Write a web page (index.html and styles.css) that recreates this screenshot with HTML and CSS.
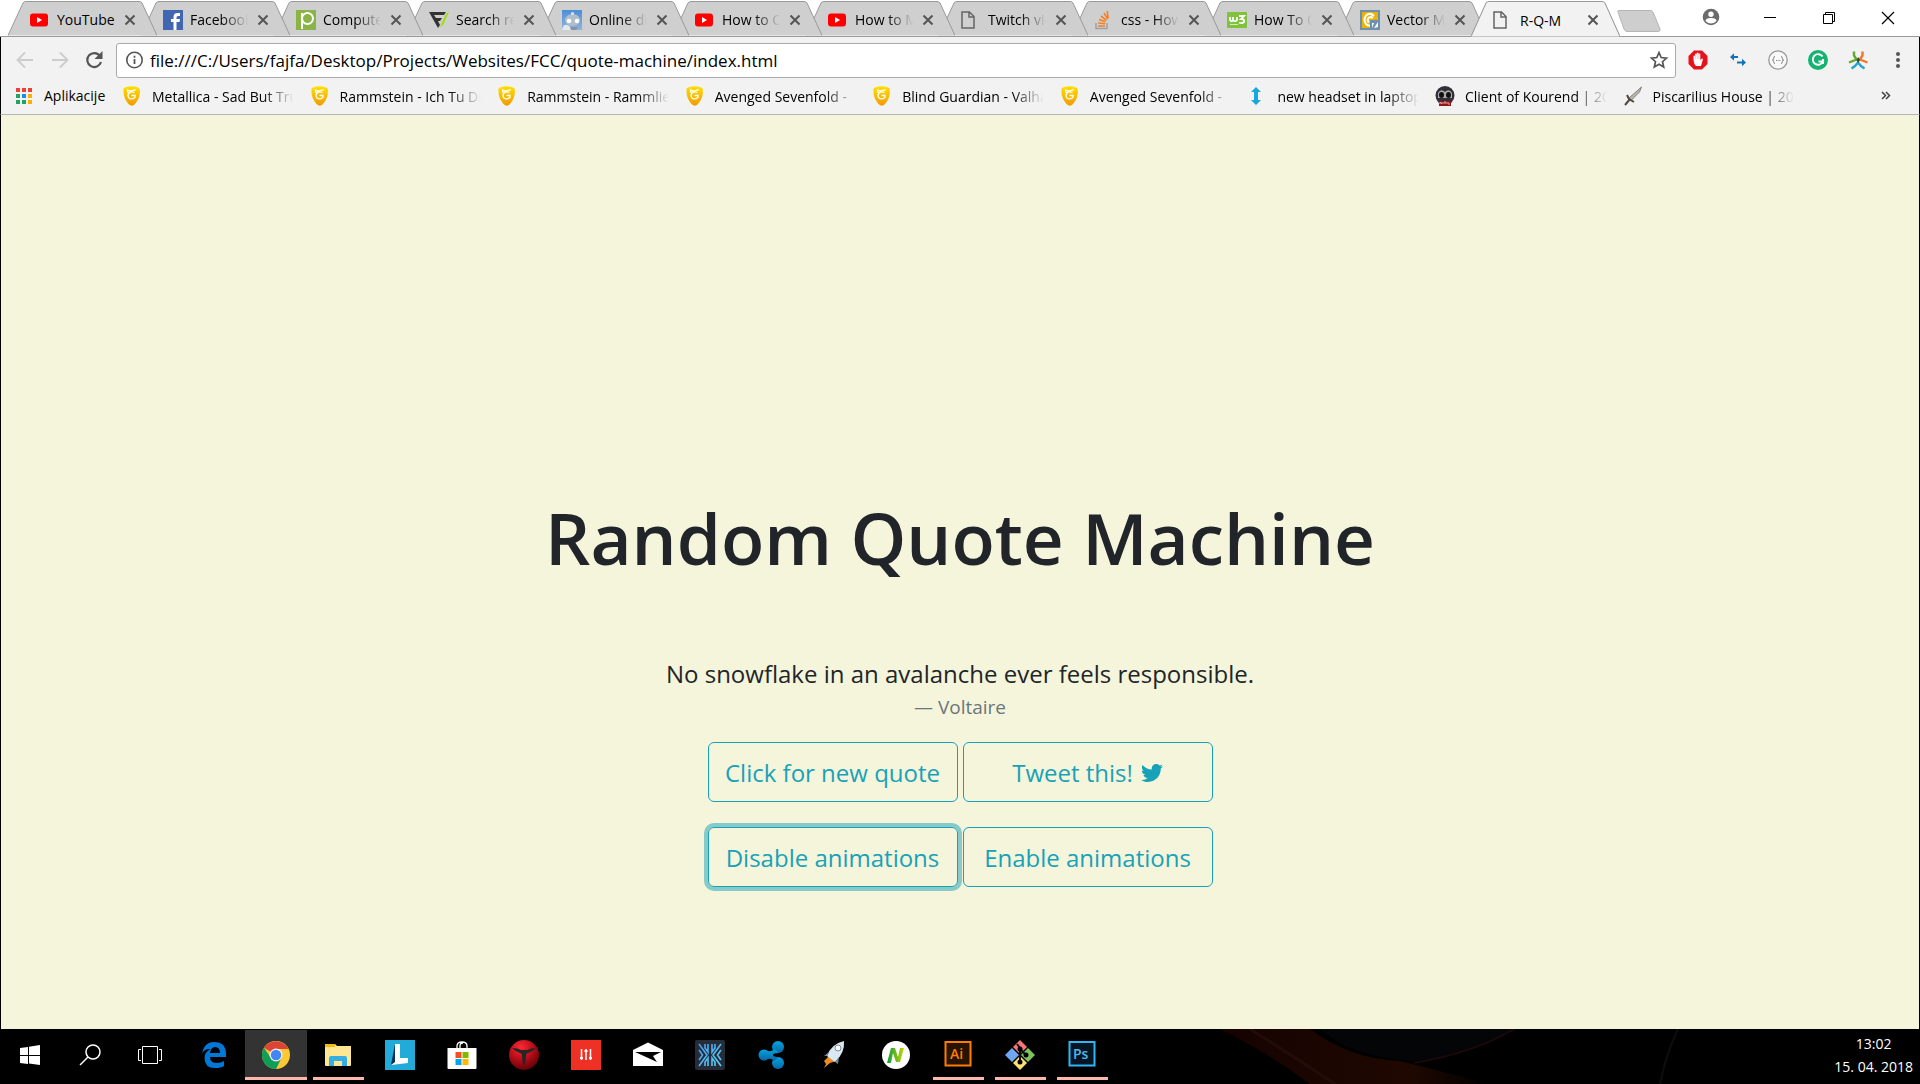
FILE: index.html
```html
<!DOCTYPE html>
<html lang="en">
<head>
<meta charset="utf-8">
<title>R-Q-M</title>
<link rel="stylesheet" href="styles.css">
</head>
<body>
<svg class="defs" aria-hidden="true">
  <defs>
    <linearGradient id="gold" x1="0" y1="0" x2="0" y2="1"><stop offset="0" stop-color="#ffe000"/><stop offset="1" stop-color="#f29a00"/></linearGradient>
    <linearGradient id="sky" x1="0" y1="0" x2="0" y2="1"><stop offset="0" stop-color="#4c8ed8"/><stop offset="1" stop-color="#8fb6dc"/></linearGradient>
    <linearGradient id="ripple" x1="0" y1="0" x2="0" y2="1"><stop offset="0" stop-color="#00a5df"/><stop offset="1" stop-color="#0a66a8"/></linearGradient>
    <linearGradient id="exo" gradientUnits="userSpaceOnUse" x1="0" y1="0" x2="30" y2="30"><stop offset="0" stop-color="#3f8ff0"/><stop offset="1" stop-color="#5fe0f5"/></linearGradient>
    <radialGradient id="ruby" cx=".4" cy=".25" r=".8"><stop offset="0" stop-color="#ff2a35"/><stop offset=".5" stop-color="#b80d18"/><stop offset="1" stop-color="#5a0006"/></radialGradient>
    <linearGradient id="neo" x1="0" y1="0" x2="1" y2="0"><stop offset="0" stop-color="#0f9b3c"/><stop offset="1" stop-color="#c4d600"/></linearGradient>
  </defs>
  <symbol id="shape" viewBox="0 0 149 36" preserveAspectRatio="none"><path d="M0 35.500 L15 3 Q16 1.500 18 1.500 H131 Q133 1.500 134 3 L149 35.500" stroke-width="1"/></symbol>
  <symbol id="close" viewBox="0 0 14 14"><path d="M2.500 2.500l9 9M11.500 2.500l-9 9" stroke="#555" stroke-width="2"/></symbol>
  <symbol id="youtube" viewBox="0 0 20 20"><rect y="3.500" width="18" height="13" rx="3" fill="#f00"/><path d="M7 7l5 3-5 3z" fill="#fff"/></symbol>
  <symbol id="page" viewBox="0 0 20 20"><path d="M1 2h7.500L13 6.500V18H1zM8 2v5h5" fill="none" stroke="#666" stroke-width="1.500"/></symbol>
  <symbol id="pick" viewBox="0 0 20 20"><path d="M1.500 4Q1 2 3 1.500Q10-1 16 1.500Q18 2 17.800 4Q18.500 12 13 18Q10 21.500 6.500 18Q1 12 1.500 4z" fill="url(#gold)"/><path d="M12.500 6.500Q9 5 7 7Q5 9.500 7 12Q9.500 14 13 11.500V9.500H9.500M6 7L5.500 4Q8 5.500 10.500 4.500T14 4" fill="none" stroke="#fff" stroke-width="1.300"/></symbol>
</svg>

<header class="browser">
  <div class="titlebar">
    <nav class="tabs" aria-label="Tabs">
      <div class="tab"><svg class="tab-shape"><use href="#shape"/></svg><svg class="fav"><use href="#youtube"/></svg><a class="tab-title" href="#">YouTube</a><button class="tab-close" aria-label="Close tab"><svg><use href="#close"/></svg></button></div>
      <div class="tab"><svg class="tab-shape"><use href="#shape"/></svg><svg class="fav" viewBox="0 0 20 20"><path d="M0 0h20v20H0z" fill="#4267b2"/><path d="M10.500 20v-8H8V9h2.500V7Q10.500 3 14.500 3H17v3h-2Q13.500 6 13.500 7.500V9H17l-.5 3h-3v8z" fill="#fff"/></svg><a class="tab-title fade" href="#">Facebook</a><button class="tab-close" aria-label="Close tab"><svg><use href="#close"/></svg></button></div>
      <div class="tab"><svg class="tab-shape"><use href="#shape"/></svg><svg class="fav" viewBox="0 0 20 20"><path d="M0 0h20v20H0z" fill="#8ab446"/><path d="M6 19V3" stroke="#fff" stroke-width="2"/><circle cx="11.500" cy="8.500" r="5.500" fill="none" stroke="#fff" stroke-width="2"/></svg><a class="tab-title fade" href="#">Computer</a><button class="tab-close" aria-label="Close tab"><svg><use href="#close"/></svg></button></div>
      <div class="tab"><svg class="tab-shape"><use href="#shape"/></svg><svg class="fav" viewBox="0 0 20 20"><path d="M0 2h17l-2 3H5l2 3h6l-2 3H9l2 4-2 3z" fill="#333"/><path d="M17 4l3-2-6 13-3 2z" fill="#9be000"/></svg><a class="tab-title fade" href="#">Search results</a><button class="tab-close" aria-label="Close tab"><svg><use href="#close"/></svg></button></div>
      <div class="tab"><svg class="tab-shape"><use href="#shape"/></svg><svg class="fav" viewBox="0 0 20 20"><path d="M0 0h20v20H0z" fill="url(#sky)"/><ellipse cx="10.500" cy="10" rx="7.500" ry="6" fill="#b4becb"/><circle cx="10.500" cy="3.500" r="1.500" fill="#e6e9ee"/><circle cx="7" cy="11" r="2.300" fill="#fff"/><circle cx="15" cy="11" r="2.300" fill="#fff"/><path d="M0 20q1-6 5-5t4 5z" fill="#e5e9ee"/><path d="M8 17h8l-2 3h-5z" fill="#8792a5"/></svg><a class="tab-title fade" href="#">Online diagram</a><button class="tab-close" aria-label="Close tab"><svg><use href="#close"/></svg></button></div>
      <div class="tab"><svg class="tab-shape"><use href="#shape"/></svg><svg class="fav"><use href="#youtube"/></svg><a class="tab-title fade" href="#">How to Create</a><button class="tab-close" aria-label="Close tab"><svg><use href="#close"/></svg></button></div>
      <div class="tab"><svg class="tab-shape"><use href="#shape"/></svg><svg class="fav"><use href="#youtube"/></svg><a class="tab-title fade" href="#">How to Make</a><button class="tab-close" aria-label="Close tab"><svg><use href="#close"/></svg></button></div>
      <div class="tab"><svg class="tab-shape"><use href="#shape"/></svg><svg class="fav"><use href="#page"/></svg><a class="tab-title fade" href="#">Twitch viewer</a><button class="tab-close" aria-label="Close tab"><svg><use href="#close"/></svg></button></div>
      <div class="tab"><svg class="tab-shape"><use href="#shape"/></svg><svg class="fav" viewBox="0 0 20 20"><path d="M2 13v5.500h11V13" fill="none" stroke="#9aa3ab" stroke-width="1.500"/><path d="M4 16h7M4.200 13l7 .8M5 9.500l6.500 2.300M7 6l5.500 4.300M10 3l3.800 6M13.200 1l1 7" stroke="#f48024" stroke-width="1.600"/></svg><a class="tab-title fade" href="#">css - How to</a><button class="tab-close" aria-label="Close tab"><svg><use href="#close"/></svg></button></div>
      <div class="tab"><svg class="tab-shape"><use href="#shape"/></svg><svg class="fav" viewBox="0 0 20 20"><rect y="2" width="20" height="16" rx="1" fill="#80c23c"/><path d="M3 7v3q1.500 2.500 3 0V7v3q2 2.500 4 0V7M12 6h5l-3 3q4 0 3 3-2 2-5 .5" fill="none" stroke="#fff" stroke-width="1.800"/><path d="M3 14.500h8" stroke="#d5edbb"/></svg><a class="tab-title fade" href="#">How To Create</a><button class="tab-close" aria-label="Close tab"><svg><use href="#close"/></svg></button></div>
      <div class="tab"><svg class="tab-shape"><use href="#shape"/></svg><svg class="fav" viewBox="0 0 20 20"><path d="M1 1h18v18H1z" fill="#eab308" stroke="#6f8faa" stroke-width="2"/><path d="M14 6Q10 2 6 5.500Q3 10 6 14Q8 16 10 15.500M13 8Q10 6 8 8.500Q7 11 9 12.500" fill="none" stroke="#fff" stroke-width="2"/><path d="M10 10h10v10H10z" fill="#6d92b1"/><path d="M12 18v-5h2zM14 18l4-6v5z" fill="#fff"/></svg><a class="tab-title fade" href="#">Vector Magic</a><button class="tab-close" aria-label="Close tab"><svg><use href="#close"/></svg></button></div>
      <div class="tab active"><svg class="tab-shape"><use href="#shape"/></svg><svg class="fav"><use href="#page"/></svg><a class="tab-title" href="#">R-Q-M</a><button class="tab-close" aria-label="Close tab"><svg><use href="#close"/></svg></button></div>
    </nav>
    <button class="new-tab" aria-label="New tab"><svg viewBox="0 0 44 22"><path d="M1 2Q0 .5 2 .5H33Q35 .5 36 2L43 19Q43.500 21.500 41.500 21.500H10Q8 21.500 7 19z" fill="#cecece" stroke="#b5b5b5"/></svg></button>
    <div class="window-controls">
      <button aria-label="Profile"><svg viewBox="0 0 20 20"><circle cx="10" cy="9" r="8.300" fill="#6b6b6b"/><circle cx="10" cy="6.300" r="2.700" fill="#fff"/><path d="M4.500 13q0-3 5.500-3t5.500 3q-5.500 5-11 0z" fill="#fff"/></svg></button>
      <button aria-label="Minimize"><svg viewBox="0 0 20 20"><path d="M4 9.500h12" stroke="#000"/></svg></button>
      <button aria-label="Restore"><svg viewBox="0 0 20 20"><path d="M4.500 6.500h9v9h-9zM6.500 6V4.500h9v9H14" fill="none" stroke="#000"/></svg></button>
      <button aria-label="Close"><svg viewBox="0 0 20 20"><path d="M4 4l12 12M16 4L4 16" stroke="#000" stroke-width="1.200"/></svg></button>
    </div>
  </div>

  <div class="toolbar">
    <div class="nav-buttons">
      <button aria-label="Back"><svg viewBox="0 0 20 20"><path d="M18 10H3M10 2.500L2.500 10l7.500 7.500" fill="none" stroke="#ccc" stroke-width="1.800"/></svg></button>
      <button aria-label="Forward"><svg viewBox="0 0 20 20"><path d="M2 10h15M10 2.500l7.500 7.500-7.500 7.500" fill="none" stroke="#ccc" stroke-width="1.800"/></svg></button>
      <button aria-label="Reload"><svg viewBox="0 0 20 20"><path d="M15 6A7 7 0 1 0 16 12" fill="none" stroke="#555" stroke-width="2.200"/><path d="M17.500 1v8h-8z" fill="#555"/></svg></button>
    </div>
    <div class="omnibox">
      <svg class="icon" viewBox="0 0 20 20"><circle cx="9.500" cy="10" r="7.700" fill="none" stroke="#555" stroke-width="1.600"/><path d="M9.500 9v5M9.500 5.800v2" stroke="#555" stroke-width="1.800"/></svg>
      <input type="text" aria-label="Address" value="file:///C:/Users/fajfa/Desktop/Projects/Websites/FCC/quote-machine/index.html">
      <button aria-label="Bookmark this page"><svg viewBox="0 0 20 20"><path d="M10 2.500l2.200 5 5.300.6-4 3.600 1.200 5.300L10 14.300 5.300 17l1.200-5.300-4-3.600 5.300-.6z" fill="none" stroke="#555" stroke-width="1.700"/></svg></button>
    </div>
    <div class="extensions">
      <button aria-label="Ad blocker"><svg viewBox="0 0 20 20"><path d="M6 .5h8L19.500 6v8L14 19.500H6L.5 14V6z" fill="#e5131c"/><path d="M5.500 8V6q.8-1 1.600 0V4q1-1.200 1.700 0V3q1-1.200 1.800 0v1q1-1.200 1.700 0v6l1.700-1.500q1.200 0 .8 1.200L13 16H8q-2.500-2-2.500-8z" fill="#fff"/><path d="M7.300 5v4M9.200 4v5M11 4v5" stroke="#f0a0a4" stroke-width=".6"/></svg></button>
      <button aria-label="Switcher"><svg viewBox="0 0 20 20"><path d="M4 7h6M9 12.500h6" stroke="#1473b8" stroke-width="2.200"/><path d="M2 7l4-3.800v7.600zM18 12.500l-4-3.800v7.600z" fill="#1473b8"/></svg></button>
      <button aria-label="JSON formatter"><svg viewBox="0 0 20 20"><circle cx="10" cy="10" r="9.200" fill="#f8f8f8" stroke="#999" stroke-width="1.300"/><path d="M7 6.500q-1.500 0-1.300 1.700T4.200 10q1.500 0 1.500 1.800T7 13.500M13 6.500q1.500 0 1.300 1.700t1.500 1.800q-1.500 0-1.500 1.800t-1.300 1.700" fill="none" stroke="#888"/><path d="M8 10.500h1M9.700 10.500h1M11.400 10.500h1" stroke="#888"/></svg></button>
      <button aria-label="Grammar"><svg viewBox="0 0 20 20"><circle cx="10" cy="10" r="10" fill="#15b371"/><path d="M14.500 6.500A5.300 5.300 0 1 0 15 11.500h-4.500M15 9v5" fill="none" stroke="#fff" stroke-width="1.900"/></svg></button>
      <button aria-label="Launcher"><svg viewBox="0 0 20 20"><path d="M6 1.500v4l2.500 4L1 12.500" fill="none" stroke="#63a72c" stroke-width="2.400"/><path d="M14.500 1.500v4l-2.500 4 7.500 3" fill="none" stroke="#f0742a" stroke-width="2.400"/><path d="M3.500 18.500l3.500-2.500 3-3.500 3 3.500 3.500 2.500" fill="none" stroke="#25a5cf" stroke-width="2.400"/><path d="M8.500 10l1.700-3 1.800 3-1.800 3z" fill="#2f4a3a"/></svg></button>
      <button aria-label="Menu"><svg viewBox="0 0 20 20" fill="#555"><circle cx="10" cy="4" r="2"/><circle cx="10" cy="10" r="2"/><circle cx="10" cy="16" r="2"/></svg></button>
    </div>
  </div>

  <nav class="bookmarks" aria-label="Bookmarks">
    <a class="apps" href="#"><svg class="icon" viewBox="0 0 20 20"><path d="M2 2h4v4H2zM8 2h4v4H8zM14 2h4v4h-4z" fill="#ea4335"/><path d="M2 8h4v4H2zM2 14h4v4H2zM8 14h4v4H8z" fill="#1fa463"/><path d="M8 8h4v4H8z" fill="#1a8cf0"/><path d="M14 8h4v4h-4zM14 14h4v4h-4z" fill="#fbb000"/></svg>Aplikacije</a>
    <div class="bookmark-list">
      <a href="#"><svg class="icon"><use href="#pick"/></svg><span class="fade">Metallica - Sad But True</span></a>
      <a href="#"><svg class="icon"><use href="#pick"/></svg><span class="fade">Rammstein - Ich Tu Dir</span></a>
      <a href="#"><svg class="icon"><use href="#pick"/></svg><span class="fade">Rammstein - Rammlied</span></a>
      <a href="#"><svg class="icon"><use href="#pick"/></svg><span class="fade">Avenged Sevenfold -</span></a>
      <a href="#"><svg class="icon"><use href="#pick"/></svg><span class="fade">Blind Guardian - Valhalla</span></a>
      <a href="#"><svg class="icon"><use href="#pick"/></svg><span class="fade">Avenged Sevenfold -</span></a>
      <a href="#"><svg class="icon" viewBox="0 0 20 20"><path d="M9 1l5 5h-3v8h3l-5 5-5-5h3V6H4z" fill="#15a8dc"/></svg><span class="fade">new headset in laptop</span></a>
      <a href="#"><svg class="icon" viewBox="0 0 20 20"><circle cx="10" cy="9.500" r="9.500" fill="#30303a"/><path d="M3 7q3-5 7-1 4-4 7 1v5H3z" fill="#aaa"/><ellipse cx="6.500" cy="9" rx="2.500" ry="3" fill="#111"/><ellipse cx="13.500" cy="9" rx="2.500" ry="3" fill="#111"/><path d="M4 15h12v5H4z" fill="#901818"/><path d="M5 18v-2l2 2v-2m2 2v-2h2v2m2-2v2h2" stroke="#e9a0a0" fill="none"/></svg><span class="fade">Client of Kourend | 2007</span></a>
      <a href="#"><svg class="icon" viewBox="0 0 20 20"><path d="M18.500 1l-2 5-8 8-2.500-2z" fill="#b9b7ae" stroke="#6d6b65" stroke-width=".8"/><path d="M4 9l2 4 5 3M7 13l-5 6" fill="none" stroke="#4d4943" stroke-width="2"/></svg><span class="fade">Piscarilius House | 2007</span></a>
    </div>
    <button class="more" aria-label="More bookmarks"><svg class="icon" viewBox="0 0 20 20"><path d="M7 6l3.500 3.500L7 13M11 6l3.500 3.500L11 13" fill="none" stroke="#444" stroke-width="1.500"/></svg></button>
  </nav>
</header>

<main class="page">
  <h1>Random Quote Machine</h1>
  <blockquote>
    <p>No snowflake in an avalanche ever feels responsible.</p>
    <footer>— Voltaire</footer>
  </blockquote>
  <div class="actions">
    <button class="btn">Click for new quote</button>
    <button class="btn">Tweet this! <svg viewBox="0 0 512 512"><path d="M459.400 151.700c.3 4.500.3 9.100.3 13.600 0 138.700-105.600 298.600-298.600 298.600-59.500 0-114.700-17.200-161.100-47.100 8.400 1 16.600 1.300 25.300 1.300 49.100 0 94.200-16.600 130.300-44.800-46.100-1-84.800-31.200-98.100-72.800 6.500 1 13 1.600 19.800 1.600 9.400 0 18.800-1.300 27.600-3.600-48.100-9.700-84.100-52-84.100-103v-1.300c14 7.800 30.200 12.700 47.400 13.300-28.300-18.800-46.800-51-46.800-87.400 0-19.500 5.200-37.400 14.300-53 51.700 63.700 129.300 105.300 216.400 109.800-1.600-7.800-2.600-15.900-2.600-24 0-57.800 46.800-104.900 104.900-104.900 30.200 0 57.500 12.700 76.700 33.100 23.700-4.500 46.500-13.300 66.600-25.300-7.800 24.400-24.400 44.800-46.100 57.800 21.100-2.300 41.600-8.100 60.400-16.200-14.300 20.800-32.200 39.300-52.600 54.300z" fill="currentColor"/></svg></button>
    <button class="btn focused">Disable animations</button>
    <button class="btn">Enable animations</button>
  </div>
</main>

<footer class="taskbar">
  <svg class="wallpaper" viewBox="0 0 480 55" preserveAspectRatio="none" aria-hidden="true">
    <defs><linearGradient id="glow" x1="0" x2="1"><stop offset="0" stop-color="#1c0300"/><stop offset=".7" stop-color="#2a0b03"/><stop offset="1" stop-color="#000"/></linearGradient></defs>
    <path d="M20 0H110Q150 30 200 32Q240 42 290 55H110Q70 25 20 0z" fill="url(#glow)" opacity=".75"/>
    <path d="M50 0q40 25 85 55" stroke="#2c100d" stroke-width="3" fill="none" opacity=".6"/>
    <path d="M120 0q30 28 94 32q60-6 98-32z" fill="#040506"/>
    <path d="M214 34q60-10 100-34" stroke="#1c0808" stroke-width="2" fill="none"/>
    <path d="M478 0q-12 25-18 55" stroke="#100c0c" stroke-width="2" fill="none"/>
  </svg>
  <div class="tools">
    <button aria-label="Start"><svg viewBox="0 0 30 30"><path d="M5 8l8-1v8H5zM14 6.800L25 5v10H14zM5 16h8v8l-8-1zM14 16h11v9l-11-1.500z" fill="#fff"/></svg></button>
    <button aria-label="Search"><svg viewBox="0 0 30 30"><circle cx="18" cy="12" r="7" fill="none" stroke="#fff" stroke-width="1.500"/><path d="M13 17l-8 8" stroke="#fff" stroke-width="1.500"/></svg></button>
    <button aria-label="Task view"><svg viewBox="0 0 30 30"><path d="M7.500 6.500h15v17h-15zM6 9.500H3.500v11H6M24 9.500h2.500v11H24" fill="none" stroke="#fff"/></svg></button>
  </div>
  <div class="tasks">
    <button aria-label="Edge"><svg viewBox="0 0 30 30"><path d="M3 14Q5 2 15 2q12 0 12 12v3H11q0 6 7 6 4 0 7-2v5q-3 2-9 2Q5.500 28 5.500 18q0-6 6-9-7 0-8.500 5zM11 13h10q0-6-5-6-4 0-5 6z" fill="#0078d7"/></svg></button>
    <button class="current" aria-label="Chrome"><svg viewBox="0 0 30 30"><circle cx="15" cy="15" r="14" fill="#fcc934"/><path d="M15 15L3 7.800A14 14 0 0 1 27.500 9H15z" fill="#db4437"/><path d="M3 7.800A14 14 0 0 0 15 29l5.500-11L10 18z" fill="#0f9d58"/><circle cx="15" cy="15" r="6.500" fill="#f1f1f1"/><circle cx="15" cy="15" r="5.200" fill="#4285f4"/></svg></button>
    <button class="open" aria-label="File Explorer"><svg viewBox="0 0 30 30"><path d="M2 4h10l2 2h14v19q0 1-1 1H3q-1 0-1-1z" fill="#ffe794"/><path d="M2 4h10v3H2z" fill="#f5b915"/><path d="M6 26V18q0-2 2-2h14q2 0 2 2v8h-5v-5h-8v5z" fill="#35aee4"/></svg></button>
    <button aria-label="L app"><svg viewBox="0 0 30 30"><path d="M0 0h30v30H0z" fill="#22aad8"/><path d="M10 4L6 25l5-2z" fill="#04305c"/><path d="M10 4h5v14h8v5l-17 2 4-3z" fill="#fff"/></svg></button>
    <button aria-label="Store"><svg viewBox="0 0 30 30"><path d="M10 9V6q0-4 5-4t5 4v3M13 9V6q0-3 3-3" fill="none" stroke="#fff" stroke-width="1.300"/><path d="M.5 8h29v20q0 1-1 1h-27q-1 0-1-1z" fill="#fff"/><path d="M8.500 12h6v6h-6z" fill="#f25022"/><path d="M15.500 12h6v6h-6z" fill="#7fba00"/><path d="M8.500 19h6v6h-6z" fill="#00a4ef"/><path d="M15.500 19h6v6h-6z" fill="#ffb900"/></svg></button>
    <button aria-label="T game"><svg viewBox="0 0 30 30"><circle cx="15" cy="15" r="15" fill="url(#ruby)"/><path d="M3 8q6 0 9 2h6q4-2 9-2-4 4-8 5-2 0-2 3 0 6-2 10-2-4-2-10 0-3-2-3-4-1-8-5z" fill="#262626"/></svg></button>
    <button aria-label="Mixer"><svg viewBox="0 0 30 30"><path d="M0 0h30v30H0z" fill="#ef3125"/><path d="M10.500 9v11M15 9v11M19.500 9v11" stroke="#fff" stroke-width="1.500"/><path d="M9 17h3v2H9zM13.500 10h3v2h-3zM18 17h3v2h-3z" fill="#fff"/></svg></button>
    <button aria-label="Mail"><svg viewBox="0 0 30 30"><path d="M0 10l15-7.500L30 10v16H0z" fill="#fff"/><path d="M2 12h26l-8 4 4 6L2 12z" fill="#000"/></svg></button>
    <button aria-label="Exodus"><svg viewBox="0 0 30 30"><rect width="30" height="30" rx="2" fill="#262d38"/><path d="M10 4v4l3 4V4M20 4v4l-3 4V4M10 26v-4l3-4v8M20 26v-4l-3-4v8M4 4l8 11-8 11M26 4l-8 11 8 11M4 10l3.500 5L4 20M26 10l-3.500 5 3.500 5" fill="none" stroke="url(#exo)" stroke-width="1.600"/></svg></button>
    <button aria-label="Ripple"><svg viewBox="0 0 30 30"><g fill="url(#ripple)"><circle cx="7" cy="15" r="5.500"/><circle cx="21" cy="7" r="6"/><circle cx="21" cy="23" r="6"/><path d="M8 10q6 3 9-1l5 4q-6 0-6 2t6 2l-5 4q-3-4-9-1z"/></g></svg></button>
    <button aria-label="Rocket"><svg viewBox="0 0 30 30"><path d="M10 16l-5 5 2 3-2 4 6-5 6-2" fill="#ed8c22"/><path d="M25 1q1 12-9 21L8 16Q12 4 25 1z" fill="#d9e8f2"/><circle cx="19" cy="8" r="3" fill="#fff" stroke="#7d8b98"/><path d="M8 16l3-5-6 5zM16 22l4-5-1 7z" fill="#788793"/></svg></button>
    <button aria-label="N app"><svg viewBox="0 0 30 30"><circle cx="15" cy="15" r="14" fill="#fff"/><path d="M6 23L10 8h4l3 9 2-9h4l-4 14h-4l-3-9-2 10z" fill="url(#neo)"/></svg></button>
    <button class="open" aria-label="Illustrator"><svg viewBox="0 0 30 30"><path d="M2.500 2h25v23.500h-25z" fill="#261300" stroke="#ff7c00" stroke-width="2"/><text class="mark" x="7" y="19" fill="#ff7c00">Ai</text></svg></button>
    <button class="open" aria-label="Git"><svg viewBox="0 0 30 30"><path d="M15 0l7 7-7 7-7-7z" fill="#f5757b"/><path d="M23 8l7 7-7 7-7-7z" fill="#80c35c"/><path d="M7 8l7 7-7 7-7-7z" fill="#70a6f2"/><path d="M15 16l7 7-7 7-7-7z" fill="#ffdf70"/><path d="M12 4l3 4v15M15 9l6 6" stroke="#111" stroke-width="2" fill="none"/><circle cx="15" cy="9" r="2.500"/><circle cx="21" cy="15" r="2.500"/><circle cx="15" cy="22" r="2.500"/></svg></button>
    <button class="open" aria-label="Photoshop"><svg viewBox="0 0 30 30"><path d="M2.500 2h25v23.500h-25z" fill="#071421" stroke="#31b5f5" stroke-width="2"/><text class="mark" x="6" y="19" fill="#4bb9ee">Ps</text></svg></button>
  </div>
  <div class="clock"><time>13:02</time><span>15. 04. 2018</span></div>
</footer>
</body>
</html>
```
FILE: styles.css
```css
* { box-sizing: border-box; }

body {
  margin: 0;
  min-height: 100vh;
  display: flex;
  flex-direction: column;
  background: #f5f5dc;
  color: #212529;
  font-family: "Open Sans", "Noto Sans", sans-serif;
}

button {
  display: flex;
  align-items: center;
  justify-content: center;
  padding: 0;
  border: 0;
  background: none;
  font: inherit;
}

a { color: inherit; text-decoration: none; }

svg { display: block; flex: none; }

.defs { position: absolute; width: 0; height: 0; }

.icon { width: 20px; height: 20px; }

.fade {
  -webkit-mask-image: linear-gradient(to right, #000 calc(100% - 32px), transparent);
  mask-image: linear-gradient(to right, #000 calc(100% - 32px), transparent);
}

/* Browser window */
.browser { color: #000; font-size: 14px; }

.titlebar {
  display: flex;
  height: 37px;
  background: #fff;
  border-bottom: 1px solid #999;
}

.tabs {
  flex: 0 1 1620px;
  display: flex;
  min-width: 0;
  height: 37px;
  padding-left: 8px;
}

.tab {
  position: relative;
  flex: 0 1 149px;
  min-width: 0;
  height: 36px;
  display: flex;
  align-items: center;
  padding: 3px 20px 0 22px;
}

.tab + .tab { margin-left: -16px; }
.tab:nth-child(1) { z-index: 12; }
.tab:nth-child(2) { z-index: 11; }
.tab:nth-child(3) { z-index: 10; }
.tab:nth-child(4) { z-index: 9; }
.tab:nth-child(5) { z-index: 8; }
.tab:nth-child(6) { z-index: 7; }
.tab:nth-child(7) { z-index: 6; }
.tab:nth-child(8) { z-index: 5; }
.tab:nth-child(9) { z-index: 4; }
.tab:nth-child(10) { z-index: 3; }
.tab:nth-child(11) { z-index: 2; }
.tab.active { z-index: 13; height: 37px; }

.tab-shape {
  position: absolute;
  inset: 0;
  z-index: -1;
  width: 100%;
  height: 100%;
  fill: #cfcfcf;
  stroke: #999;
}

.tab.active .tab-shape { fill: #f2f2f2; }

.fav { width: 20px; height: 20px; }

.tab-title {
  flex: 1;
  min-width: 0;
  margin: 0 8px 0 7px;
  overflow: hidden;
  white-space: nowrap;
}

.tab-title.fade {
  -webkit-mask-image: linear-gradient(to right, #000 calc(100% - 26px), transparent);
  mask-image: linear-gradient(to right, #000 calc(100% - 26px), transparent);
}

.tab-close svg { width: 14px; height: 14px; }

.new-tab { margin: 10px auto 0 -3px; width: 44px; height: 22px; }
.new-tab svg { width: 44px; height: 22px; }

.window-controls { display: flex; height: 36px; padding-right: 3px; }
.window-controls button { width: 59px; }
.window-controls svg { width: 20px; height: 20px; }

.toolbar {
  display: flex;
  align-items: center;
  height: 45px;
  padding: 1px 1px 0 6px;
  background: #f2f2f2;
  border: solid #000;
  border-width: 0 1px;
}

.nav-buttons { display: flex; width: 109px; }
.nav-buttons button { width: 35px; height: 34px; }
.nav-buttons svg { width: 20px; height: 20px; }

.omnibox {
  flex: 1;
  display: flex;
  align-items: center;
  height: 35px;
  padding: 0 6px 0 8px;
  background: #fff;
  border: 1px solid #aaa;
  border-radius: 3px;
}

.omnibox input {
  flex: 1;
  min-width: 0;
  padding: 0 5px;
  border: 0;
  outline: 0;
  background: none;
  color: #000;
  font: 17px "Open Sans", "Noto Sans", sans-serif;
}

.omnibox svg, .extensions svg { width: 20px; height: 20px; }

.extensions { display: flex; padding-left: 2px; }
.extensions button { width: 40px; height: 34px; }

.bookmarks {
  display: flex;
  align-items: center;
  height: 33px;
  padding: 0 24px 4px 13px;
  background: #f2f2f2;
  border: solid #000;
  border-width: 0 1px;
  border-bottom: 1px solid #b6b4b6;
}

.bookmarks .apps { display: flex; width: 108px; gap: 10px; }

.bookmark-list { flex: 1; display: flex; min-width: 0; }

.bookmark-list a {
  flex: 1 1 0;
  min-width: 0;
  display: flex;
  align-items: center;
  gap: 10px;
  padding-right: 16px;
}

.bookmark-list span {
  flex: 1;
  overflow: hidden;
  white-space: nowrap;
}

.more { margin-left: 65px; }

/* Quote page */
.page {
  flex: 1;
  display: flex;
  flex-direction: column;
  align-items: center;
  justify-content: center;
  padding: 232px 16px 0;
  border: solid #000;
  border-width: 0 1px;
  text-align: center;
}

h1 {
  margin: 0 0 70px;
  font-size: 71px;
  font-weight: 600;
  line-height: 96px;
}

blockquote { margin: 0 0 20px; }

blockquote p { margin: 0; font-size: 24px; line-height: 36px; }

blockquote footer { color: #6c757d; font-size: 19px; line-height: 30px; }

.actions {
  display: grid;
  grid-template-columns: 250px 250px;
  gap: 25px 5px;
}

.btn {
  gap: 8px;
  height: 60px;
  padding-top: 2px;
  border: 1px solid #17a2b8;
  border-radius: 6px;
  color: #17a2b8;
  font-size: 24px;
  white-space: nowrap;
}

.btn svg { width: 22px; height: 22px; }

.btn.focused { box-shadow: 0 0 0 4px rgba(23, 162, 184, 0.5); }

/* Desktop taskbar */
.taskbar {
  position: relative;
  display: flex;
  height: 55px;
  background: #000;
  color: #fff;
  font-size: 14px;
}

.wallpaper {
  position: absolute;
  top: 0;
  right: 240px;
  width: 480px;
  height: 55px;
}

.tools, .tasks { display: flex; }

.tools button { width: 60px; height: 52px; }

.tasks { padding: 1px 0 4px 3px; }

.tasks button {
  width: 62px;
  height: 50px;
}

.taskbar button svg { width: 30px; height: 30px; }

.tasks .current {
  background: #333;
  border-bottom: 3px solid #ffb6ad;
  padding-top: 3px;
}

.tasks .open {
  background: linear-gradient(#ffb6ad, #ffb6ad) bottom / 51px 3px no-repeat;
}

.mark { font: 600 14px "Open Sans", sans-serif; }

.clock {
  position: relative;
  margin-left: auto;
  padding: 3px 7px 0;
  display: flex;
  flex-direction: column;
  text-align: center;
  line-height: 23px;
}
```
